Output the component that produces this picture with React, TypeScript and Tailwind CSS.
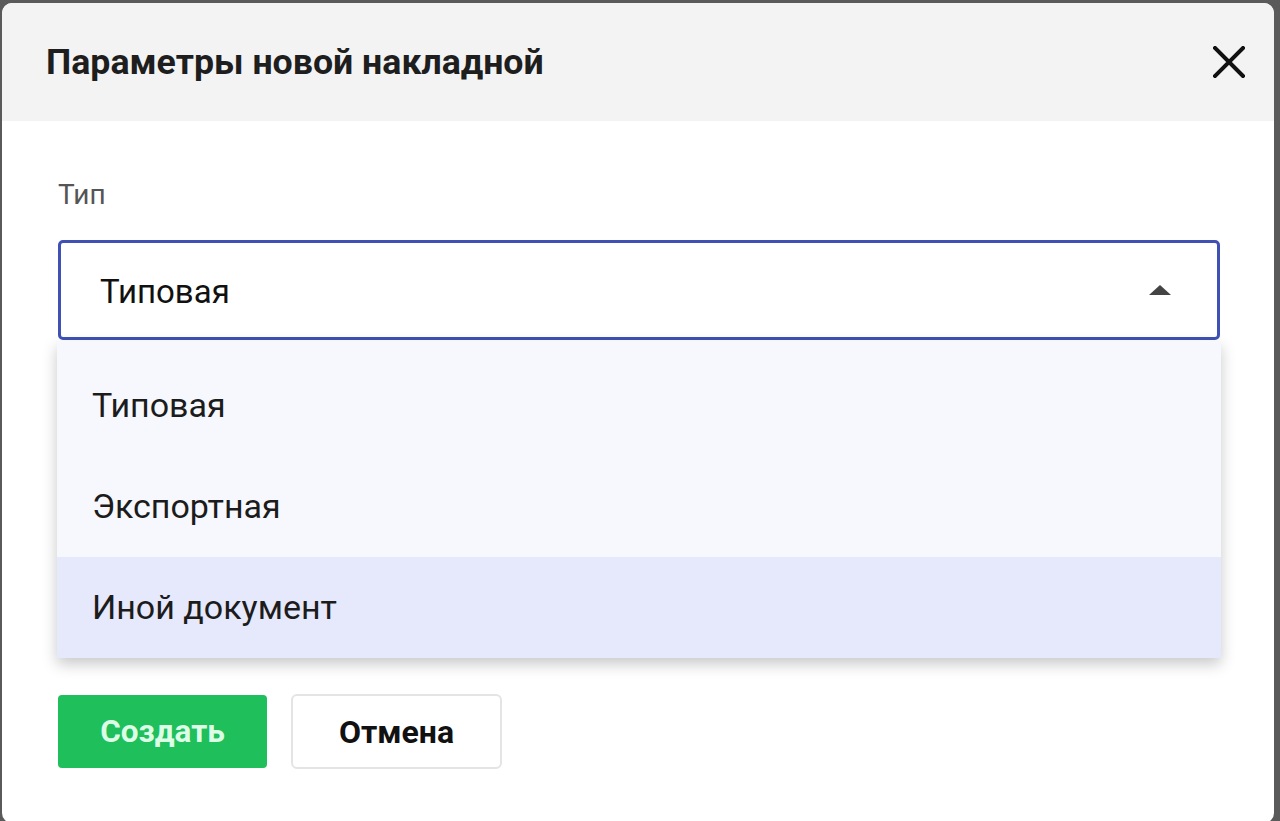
import React from 'react';

const options = ['Типовая', 'Экспортная', 'Иной документ'];

const App = () => {
  const selected = 2;

  return (
    <div className="w-full h-[821px] bg-[#5a5a5a] pt-[3px] pl-[2px] pr-[6px] overflow-hidden font-['Roboto',sans-serif]">
      <div className="bg-white rounded-[10px] h-[820px] flex flex-col">
        {/* Header */}
        <div className="h-[118px] bg-[#f3f3f3] rounded-t-[10px] flex items-center justify-between pl-[44px] pr-[28px]">
          <h2 className="text-[35.7px] font-bold text-[#1e1e1e] mt-[1px]">Параметры новой накладной</h2>
          <button className="w-[34px] h-[34px] flex items-center justify-center">
            <svg width="32" height="32" viewBox="0 0 32 32" fill="none">
              <path d="M2 2L30 30M30 2L2 30" stroke="#111" strokeWidth="4" strokeLinecap="square" />
            </svg>
          </button>
        </div>

        {/* Body */}
        <div className="pl-[56px] pr-[54px] pt-[59px]">
          <div className="h-[30px] leading-[30px] text-[28px] text-[#555]">Тип</div>

          <div className="relative mt-[30px]">
            <div className="h-[100px] border-[3px] border-[#3f51b5] rounded-[5px] flex items-center justify-between pl-[39px] pr-[46px]">
              <span className="text-[33px] text-[#111] mt-[3px]">{options[0]}</span>
              <svg width="22" height="10" viewBox="0 0 22 10">
                <path d="M0 10L11 0L22 10Z" fill="#444" />
              </svg>
            </div>

            {/* Dropdown */}
            <div className="absolute left-[-1px] right-[-1px] top-[101px] z-10 bg-[#f7f8fd] pt-[14px] shadow-[0_6px_14px_rgba(0,0,0,0.22)]">
              {options.map((o, i) => (
                <div
                  key={o}
                  className={`h-[101px] flex items-center pl-[35px] text-[34px] text-[#1c1c1c] ${i === selected ? 'bg-[#e6e8fb]' : ''}`}
                >
                  {o}
                </div>
              ))}
            </div>
          </div>

          {/* Actions */}
          <div className="mt-[355px] flex gap-[24px]">
            <button className="w-[209px] h-[73px] bg-[#1fbf5b] rounded-[4px] text-[31.5px] font-bold text-[#dcfde6]">
              Создать
            </button>
            <button className="w-[211px] h-[75px] -mt-[1px] bg-white border-2 border-[#e4e4e4] rounded-[6px] text-[32px] font-bold text-[#111]">
              Отмена
            </button>
          </div>
        </div>
      </div>
    </div>
  );
};

export default App;
